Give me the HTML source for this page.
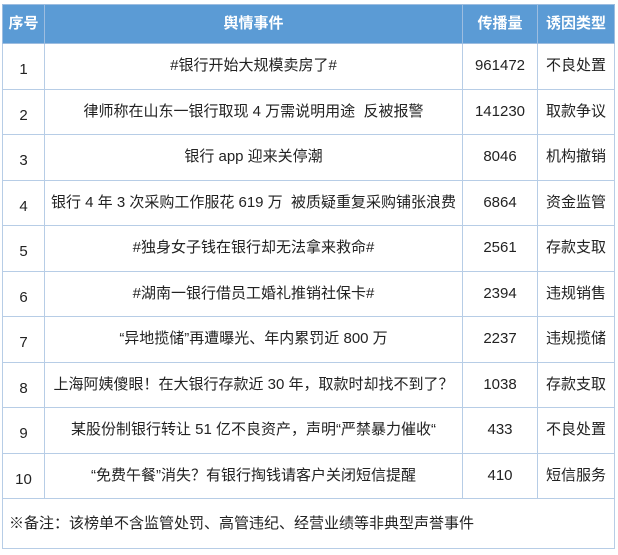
<!DOCTYPE html>
<html><head><meta charset="utf-8"><style>
html,body{margin:0;padding:0;background:#fff;}
body{width:618px;height:555px;position:relative;font-family:"Liberation Sans","Noto Sans CJK SC",sans-serif;}
table{position:absolute;left:2px;top:4px;width:612px;border-collapse:collapse;table-layout:fixed;font-size:15px;color:#222;border:1px solid #8fb0d3;}
td,th{border:1px solid #b7cde6;text-align:center;padding:0;line-height:18px;}
th{background:#5b9bd5;color:#fff;font-weight:bold;height:38px;font-size:15px;border-color:#9dbde0;}
tr.r td{height:44.5px;}
td.n span{position:relative;top:4px;}
td.note{text-align:left;padding-left:6px;height:49px;font-size:15px;}
</style></head><body>
<table>
<colgroup><col style="width:42px"><col style="width:418px"><col style="width:75px"><col style="width:77px"></colgroup>
<tr><th>序号</th><th>舆情事件</th><th>传播量</th><th>诱因类型</th></tr>
<tr class="r"><td class="n"><span>1</span></td><td>#银行开始大规模卖房了#</td><td>961472</td><td>不良处置</td></tr>
<tr class="r"><td class="n"><span>2</span></td><td>律师称在山东一银行取现 4 万需说明用途&nbsp; 反被报警</td><td>141230</td><td>取款争议</td></tr>
<tr class="r"><td class="n"><span>3</span></td><td>银行 app 迎来关停潮</td><td>8046</td><td>机构撤销</td></tr>
<tr class="r"><td class="n"><span>4</span></td><td>银行 4 年 3 次采购工作服花 619 万&nbsp; 被质疑重复采购铺张浪费</td><td>6864</td><td>资金监管</td></tr>
<tr class="r"><td class="n"><span>5</span></td><td>#独身女子钱在银行却无法拿来救命#</td><td>2561</td><td>存款支取</td></tr>
<tr class="r"><td class="n"><span>6</span></td><td>#湖南一银行借员工婚礼推销社保卡#</td><td>2394</td><td>违规销售</td></tr>
<tr class="r"><td class="n"><span>7</span></td><td>“异地揽储”再遭曝光、年内累罚近 800 万</td><td>2237</td><td>违规揽储</td></tr>
<tr class="r"><td class="n"><span>8</span></td><td>上海阿姨傻眼！在大银行存款近 30 年，取款时却找不到了？</td><td>1038</td><td>存款支取</td></tr>
<tr class="r"><td class="n"><span>9</span></td><td>某股份制银行转让 51 亿不良资产，声明“严禁暴力催收“</td><td>433</td><td>不良处置</td></tr>
<tr class="r"><td class="n"><span>10</span></td><td>“免费午餐”消失？有银行掏钱请客户关闭短信提醒</td><td>410</td><td>短信服务</td></tr>
<tr><td colspan="4" class="note">※备注：该榜单不含监管处罚、高管违纪、经营业绩等非典型声誉事件</td></tr>
</table>
</body></html>
